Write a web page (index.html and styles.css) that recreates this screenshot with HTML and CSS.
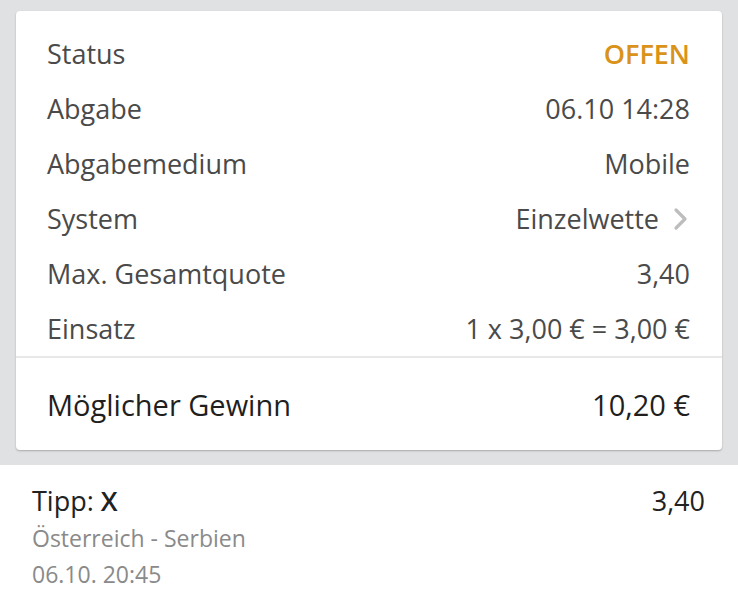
FILE: index.html
```html
<!DOCTYPE html>
<html lang="de">
<head>
    <meta charset="UTF-8">
    <meta name="viewport" content="width=device-width, initial-scale=1.0">
    <title>Wettschein</title>
    <link rel="stylesheet" href="styles.css">
</head>
<body>

<main>
    <section class="slip-card">
        <ul class="slip-rows">
            <li><span>Status</span><span class="status-open">OFFEN</span></li>
            <li><span>Abgabe</span><span>06.10 14:28</span></li>
            <li><span>Abgabemedium</span><span>Mobile</span></li>
            <li>
                <span>System</span>
                <span class="with-arrow">Einzelwette
                    <svg class="chevron" width="16" height="24" viewBox="0 0 16 24"><path d="M3 3 L12 12 L3 21" fill="none" stroke="#bdbdbd" stroke-width="3.2" stroke-linecap="round" stroke-linejoin="round"/></svg>
                </span>
            </li>
            <li><span>Max. Gesamtquote</span><span>3,40</span></li>
            <li><span>Einsatz</span><span>1 x 3,00 € = 3,00 €</span></li>
        </ul>
        <div class="slip-win">
            <span>Möglicher Gewinn</span>
            <span>10,20 €</span>
        </div>
    </section>

    <section class="tip">
        <div class="tip-head">
            <span>Tipp: <b>X</b></span>
            <span>3,40</span>
        </div>
        <div class="tip-sub">Österreich - Serbien</div>
        <div class="tip-sub">06.10. 20:45</div>
    </section>
</main>

</body>
</html>
```

FILE: styles.css
```css
/* Page */
body {
    font-family: "Open Sans", "Noto Sans", sans-serif;
    margin: 0;
    padding: 0;
    background-color: #e0e1e3;
    color: #4a4a4a;
}

main {
    padding-top: 11px;
}

/* Slip summary card */
.slip-card {
    margin: 0 16px 15px;
    background: white;
    border-radius: 4px;
    box-shadow: 0 1px 2px rgba(0, 0, 0, 0.25);
}

.slip-rows {
    list-style-type: none;
    margin: 0;
    padding: 15px 32px 0 31px;
    border-bottom: 2px solid #e8e8e8;
}

.slip-rows li {
    display: flex;
    justify-content: space-between;
    align-items: center;
    height: 55px;
    font-size: 27px;
}

.status-open {
    color: #d9921a;
    font-weight: 600;
}

.with-arrow {
    display: flex;
    align-items: center;
    gap: 14px;
}

.chevron {
    margin-right: 1px;
}

.slip-win {
    display: flex;
    justify-content: space-between;
    align-items: center;
    height: 92px;
    padding: 0 32px 0 31px;
    font-size: 29px;
    color: #1f1f1f;
}

/* Tip detail */
.tip {
    background: white;
    padding: 17px 33px 20px 32px;
    min-height: 110px;
}

.tip-head {
    display: flex;
    justify-content: space-between;
    font-size: 27px;
    color: #222;
    line-height: 38px;
}

.tip-head b {
    font-weight: 600;
}

.tip-sub {
    font-size: 23px;
    color: #8a8a8a;
    line-height: 36px;
}
```
